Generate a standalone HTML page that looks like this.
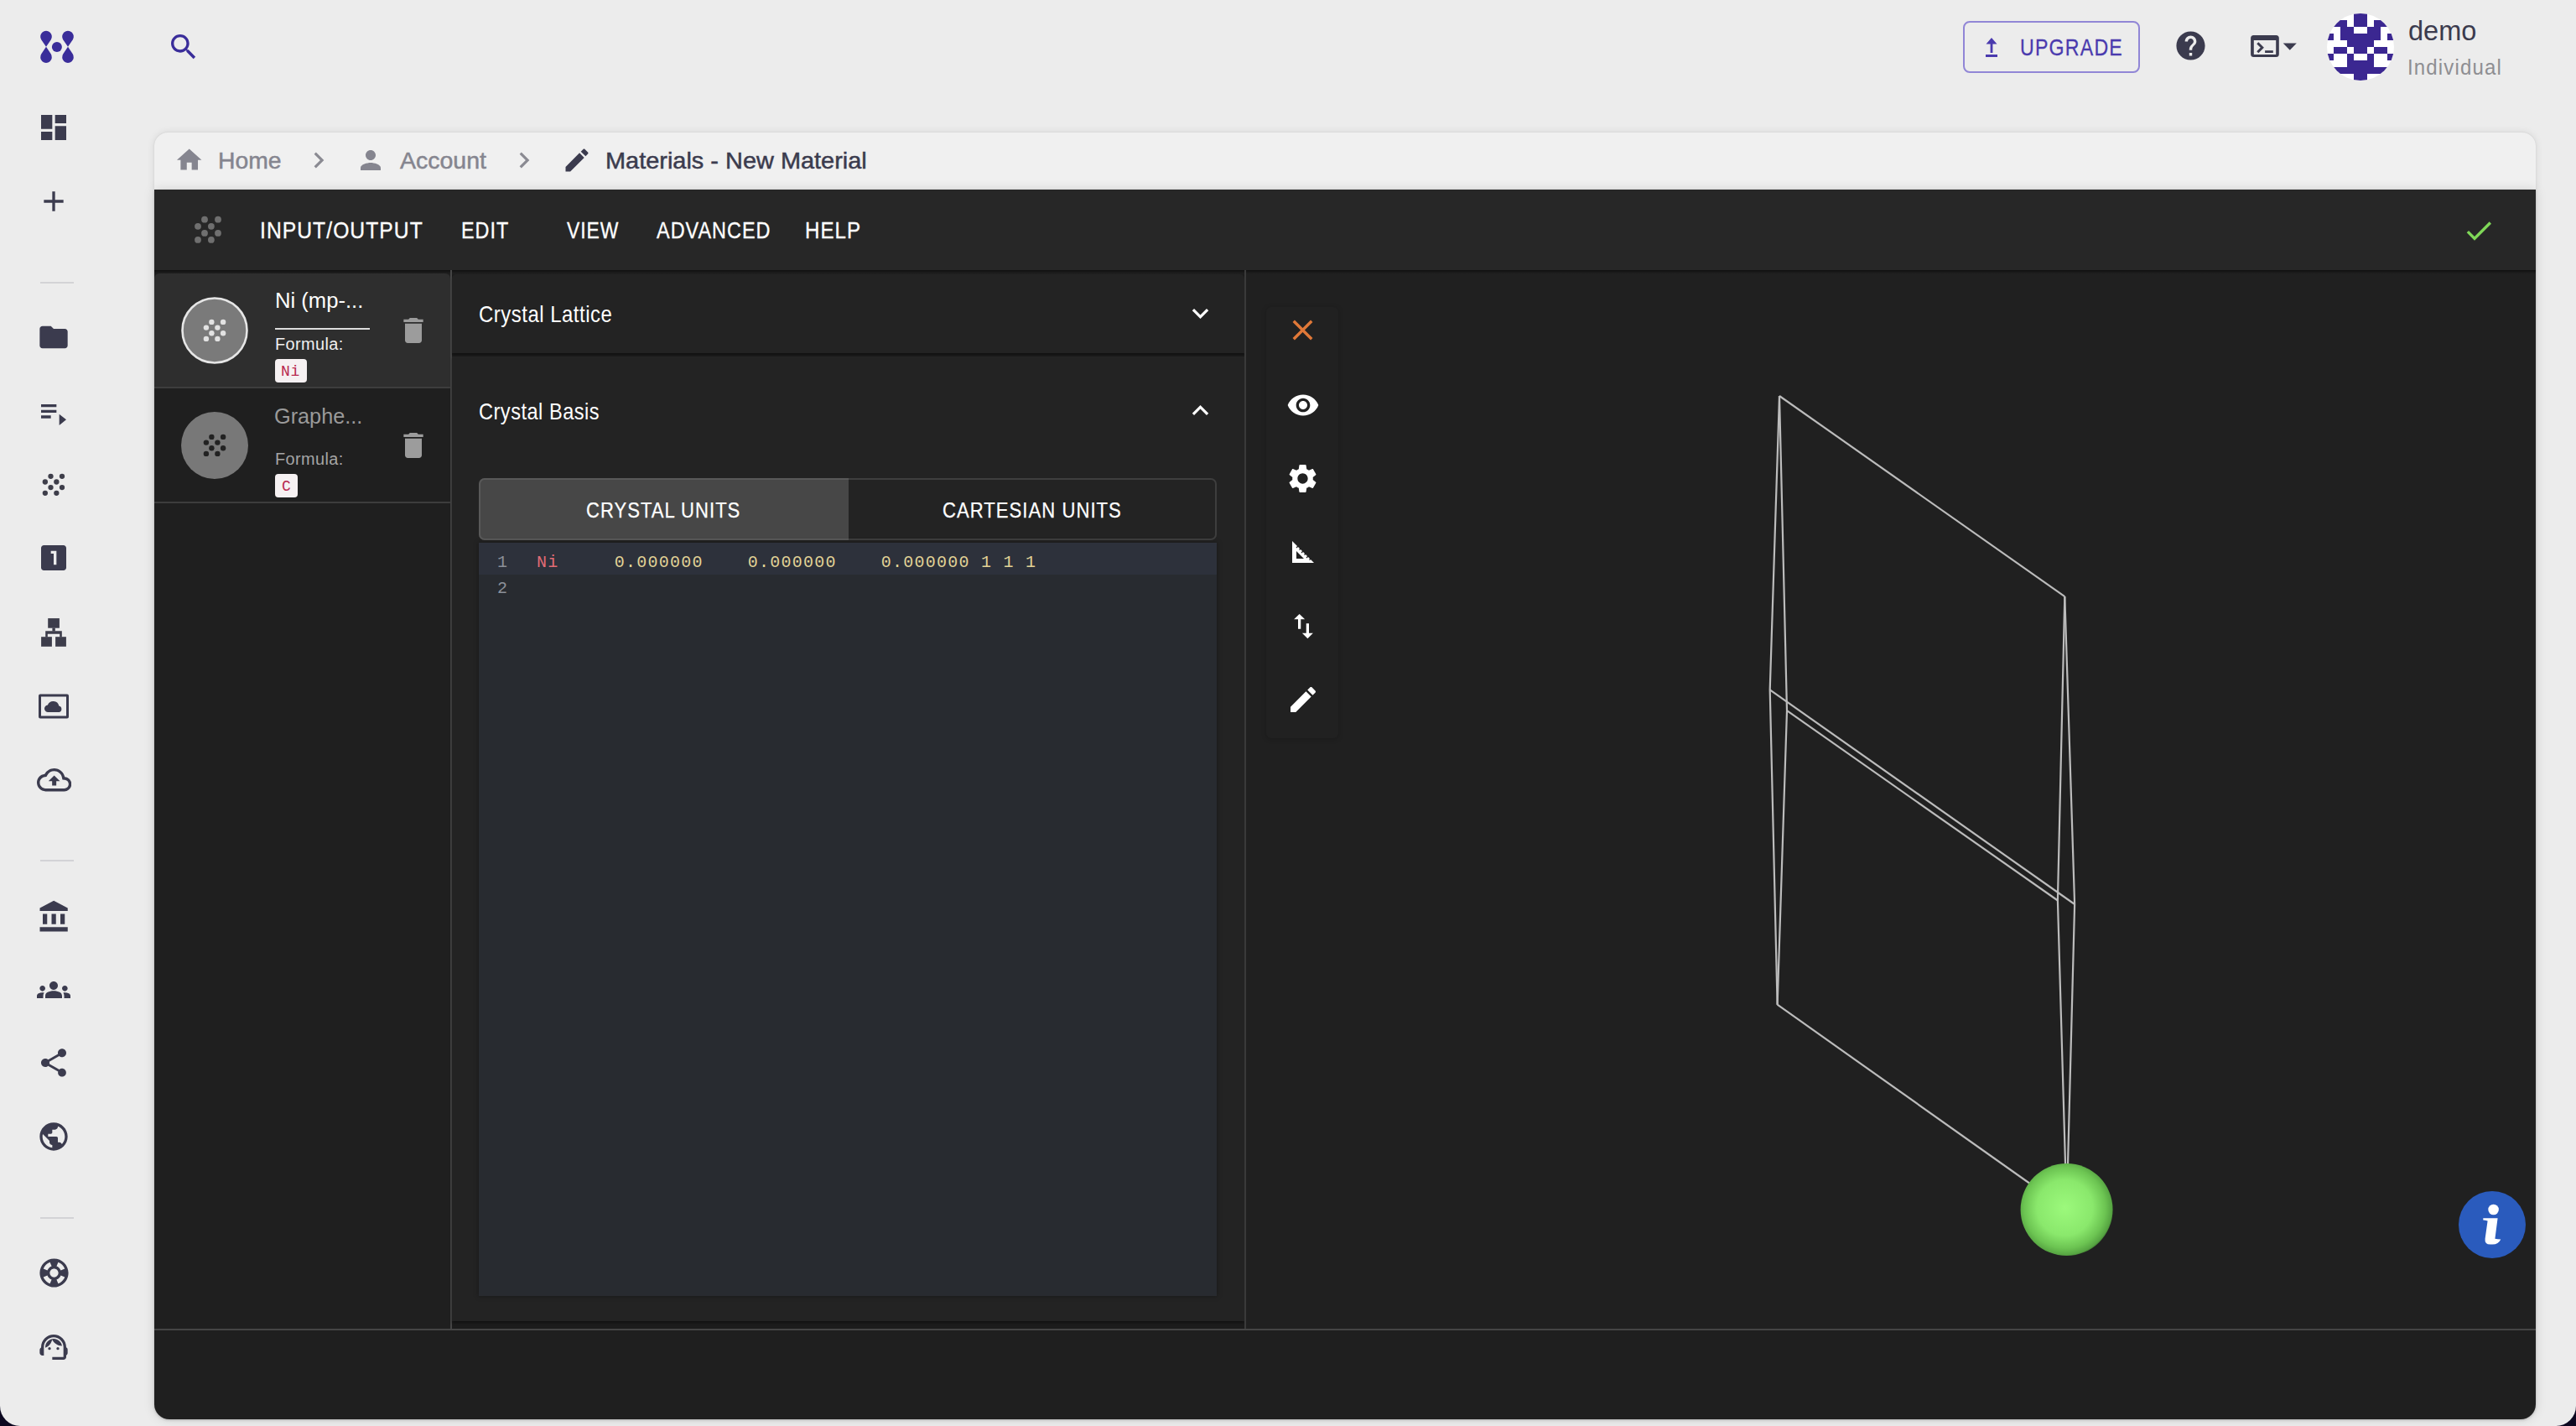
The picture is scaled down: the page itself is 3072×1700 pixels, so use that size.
<!DOCTYPE html>
<html><head><meta charset="utf-8">
<style>
*{box-sizing:border-box;margin:0;padding:0}
html,body{width:3072px;height:1700px;overflow:hidden;background:#0c0820;font-family:"Liberation Sans",sans-serif}
.abs{position:absolute}
#page{position:absolute;left:0;top:0;width:3072px;height:1700px;background:#ececec;border-radius:0 0 24px 24px;overflow:hidden}
svg.ic{position:absolute;fill:#3b3b4e}
.t{position:absolute;white-space:nowrap;line-height:1;transform-origin:0 0}
.div{position:absolute;left:48px;width:40px;height:2px;background:#d3d3d6}
</style></head>
<body>
<div id="page">
<!-- ============ LEFT SIDEBAR ============ -->
<!-- logo -->
<svg class="ic" style="left:44px;top:34px;width:48px;height:44px;fill:#3a2d9a" viewBox="44 34 48 44">
  <path d="M55,55.8 L49.32,47.38 A6.85,6.85 0 1 1 60.68,47.38 Z"/>
  <path d="M55,55.8 L49.32,64.22 A6.85,6.85 0 1 0 60.68,64.22 Z"/>
  <path d="M81,55.8 L75.32,47.38 A6.85,6.85 0 1 1 86.68,47.38 Z"/>
  <path d="M81,55.8 L75.32,64.22 A6.85,6.85 0 1 0 86.68,64.22 Z"/>
  <circle cx="67.9" cy="55.9" r="6"/>
</svg>
<!-- dashboard -->
<svg class="ic" style="left:44px;top:132px;width:40px;height:40px" viewBox="0 0 24 24"><path d="M3 13h8V3H3v10zm0 8h8v-6H3v6zm10 0h8V11h-8v10zm0-18v6h8V3h-8z"/></svg>
<!-- add -->
<svg class="ic" style="left:44px;top:220px;width:40px;height:40px" viewBox="0 0 24 24"><path d="M19 13h-6v6h-2v-6H5v-2h6V5h2v6h6v2z"/></svg>
<div class="div" style="top:336px"></div>
<!-- folder -->
<svg class="ic" style="left:44px;top:382px;width:40px;height:40px" viewBox="0 0 24 24"><path d="M10 4H4c-1.1 0-1.99.9-1.99 2L2 18c0 1.1.9 2 2 2h16c1.1 0 2-.9 2-2V8c0-1.1-.9-2-2-2h-8l-2-2z"/></svg>
<!-- playlist -->
<svg class="ic" style="left:44px;top:472px;width:40px;height:40px" viewBox="0 0 24 24"><path d="M3 6h11v2H3zm0 4h11v2H3zm0 4h7v2H3zm13-1v8l5-4z"/></svg>
<!-- dots -->
<svg class="abs" style="left:44px;top:558px;width:40px;height:40px;fill:#3e3e4a" viewBox="44 558 40 40">
  <circle cx="60.5" cy="567.8" r="3.15"/><circle cx="74" cy="567.8" r="3.15"/>
  <circle cx="53.85" cy="574.5" r="3.15"/><circle cx="67.35" cy="574.5" r="3.15"/>
  <circle cx="60.5" cy="581.1" r="3.15"/><circle cx="74" cy="581.1" r="3.15"/>
  <circle cx="53.85" cy="587.8" r="3.15"/><circle cx="67.35" cy="587.8" r="3.15"/>
</svg>
<!-- looks one -->
<svg class="ic" style="left:44px;top:645px;width:40px;height:40px" viewBox="0 0 24 24"><path d="M19 3H5c-1.1 0-2 .9-2 2v14c0 1.1.9 2 2 2h14c1.1 0 2-.9 2-2V5c0-1.1-.9-2-2-2zm-5 14h-2V9h-2V7h4v10z"/></svg>
<!-- sitemap -->
<svg class="abs" style="left:44px;top:733px;width:40px;height:40px;fill:#3d3d4b" viewBox="44 733 40 40">
  <rect x="57.2" y="737.1" width="13.7" height="11.6"/>
  <rect x="62.4" y="748.5" width="3.4" height="4"/>
  <path d="M54.2 752.2h19.6v7.2h-2.6v-3.7H56.8v3.7h-2.6z"/>
  <rect x="49.1" y="759.2" width="12.8" height="11.6"/>
  <rect x="66.1" y="759.2" width="12.8" height="11.6"/>
</svg>
<!-- cloud box -->
<svg class="ic" style="left:44px;top:822px;width:40px;height:40px" viewBox="0 0 40 40">
  <path d="M4 5.5h32a2 2 0 0 1 2 2v25a2 2 0 0 1-2 2H4a2 2 0 0 1-2-2v-25a2 2 0 0 1 2-2zm1 3v23h30v-23z"/>
  <path d="M13.5 27a4.2 4.2 0 0 1-.6-8.4 7 7 0 0 1 13.4 1 3.8 3.8 0 0 1 .3 7.4z"/>
</svg>
<!-- cloud upload -->
<svg class="ic" style="left:43.5px;top:909px;width:41.3px;height:41.3px" viewBox="0 0 24 24"><path d="M19.35 10.04C18.67 6.59 15.64 4 12 4 9.11 4 6.6 5.64 5.35 8.04 2.34 8.36 0 10.91 0 14c0 3.31 2.69 6 6 6h13c2.76 0 5-2.24 5-5 0-2.64-2.05-4.78-4.65-4.96zM19 18H6c-2.21 0-4-1.79-4-4 0-2.05 1.53-3.76 3.56-3.97l1.07-.11.5-.95C8.08 7.14 9.94 6 12 6c2.62 0 4.88 1.86 5.39 4.43l.3 1.5 1.53.11c1.56.1 2.78 1.41 2.78 2.96 0 1.65-1.35 3-3 3zM8 13h2.55v3h2.9v-3H16l-4-4z"/></svg>
<div class="div" style="top:1025px"></div>
<!-- bank -->
<svg class="ic" style="left:43.5px;top:1072px;width:42px;height:42px" viewBox="0 0 24 24"><path d="M4 10v7h3v-7H4zm6 0v7h3v-7h-3zM2 22h19v-3H2v3zm14-12v7h3v-7h-3zm-4.5-9L2 6v2h19V6l-9.5-5z"/></svg>
<!-- groups -->
<svg class="ic" style="left:44px;top:1160px;width:40px;height:40px" viewBox="0 0 24 24"><path d="M12 12.75c1.63 0 3.07.39 4.24.9 1.08.48 1.76 1.56 1.76 2.73V18H6v-1.61c0-1.18.68-2.26 1.76-2.73 1.17-.52 2.61-.91 4.24-.91zM4 13c1.1 0 2-.9 2-2s-.9-2-2-2-2 .9-2 2 .9 2 2 2zm1.13 1.1c-.37-.06-.74-.1-1.13-.1-.99 0-1.93.21-2.78.58C.48 14.9 0 15.62 0 16.43V18h4.5v-1.61c0-.83.23-1.61.63-2.29zM20 13c1.1 0 2-.9 2-2s-.9-2-2-2-2 .9-2 2 .9 2 2 2zm4 3.43c0-.81-.48-1.53-1.22-1.85-.85-.37-1.79-.58-2.78-.58-.39 0-.76.04-1.13.1.4.68.63 1.46.63 2.29V18H24v-1.57zM12 6c1.66 0 3 1.34 3 3s-1.34 3-3 3-3-1.34-3-3 1.34-3 3-3z"/></svg>
<!-- share -->
<svg class="ic" style="left:44px;top:1247px;width:40px;height:40px" viewBox="0 0 24 24"><path d="M18 16.08c-.76 0-1.44.3-1.96.77L8.91 12.7c.05-.23.09-.46.09-.7s-.04-.47-.09-.7l7.05-4.11c.54.5 1.25.81 2.04.81 1.66 0 3-1.34 3-3s-1.34-3-3-3-3 1.34-3 3c0 .24.04.47.09.7L8.04 9.81C7.5 9.31 6.790 9 6 9c-1.66 0-3 1.34-3 3s1.34 3 3 3c.79 0 1.5-.31 2.04-.81l7.12 4.16c-.05.21-.08.43-.08.65 0 1.61 1.31 2.92 2.92 2.92 1.61 0 2.92-1.31 2.92-2.92s-1.31-2.92-2.92-2.92z"/></svg>
<!-- globe -->
<svg class="ic" style="left:44px;top:1335px;width:40px;height:40px" viewBox="0 0 24 24"><path d="M12 2C6.48 2 2 6.48 2 12s4.480 10 10 10 10-4.48 10-10S17.52 2 12 2zm-1 17.93c-3.95-.49-7-3.85-7-7.93 0-.62.08-1.21.21-1.79L9 15v1c0 1.1.9 2 2 2v1.93zm6.9-2.54c-.26-.81-1-1.39-1.9-1.39h-1v-3c0-.55-.45-1-1-1H8v-2h2c.55 0 1-.45 1-1V7h2c1.1 0 2-.9 2-2v-.41c2.93 1.19 5 4.06 5 7.41 0 2.08-.8 3.97-2.1 5.39z"/></svg>
<div class="div" style="top:1451px"></div>
<!-- lifebuoy -->
<svg class="ic" style="left:43.5px;top:1497px;width:41px;height:41px" viewBox="0 0 24 24"><path d="M12 2C6.48 2 2 6.48 2 12s4.48 10 10 10 10-4.48 10-10S17.52 2 12 2zm7.46 7.12l-2.78 1.15c-.51-1.360-1.58-2.44-2.95-2.94l1.15-2.78c2.1.8 3.77 2.47 4.58 4.57zM12 15c-1.66 0-3-1.34-3-3s1.34-3 3-3 3 1.34 3 3-1.34 3-3 3zM9.13 4.54l1.17 2.78c-1.38.5-2.47 1.59-2.98 2.97L4.54 9.13c.81-2.11 2.48-3.78 4.59-4.59zM4.54 14.87l2.78-1.15c.51 1.38 1.59 2.46 2.97 2.96l-1.17 2.78c-2.1-.81-3.77-2.48-4.58-4.59zm10.34 4.59l-1.15-2.78c1.37-.51 2.45-1.59 2.95-2.97l2.78 1.17c-.81 2.1-2.48 3.77-4.58 4.58z"/></svg>
<!-- support agent -->
<svg class="ic" style="left:44px;top:1586px;width:40px;height:40px" viewBox="0 0 24 24"><path d="M21 12.22C21 6.73 16.74 3 12 3c-4.69 0-9 3.65-9 9.28-.6.34-1 .98-1 1.72v2c0 1.1.9 2 2 2h1v-6.1c0-3.87 3.13-7 7-7s7 3.13 7 7V19h-8v2h8c1.1 0 2-.9 2-2v-1.22c.59-.31 1-.92 1-1.64v-2.3c0-.7-.41-1.31-1-1.62z"/><circle cx="9" cy="13" r="1"/><circle cx="15" cy="13" r="1"/><path d="M18 11.03C17.52 8.18 15.04 6 12.05 6c-3.03 0-6.29 2.51-6.03 6.45 2.47-1.01 4.33-3.21 4.86-5.89 1.31 2.63 4 4.44 7.12 4.47z"/></svg>

<!-- ============ HEADER ============ -->
<svg class="ic" style="left:199px;top:36px;width:40px;height:40px;fill:#3a2d9a" viewBox="0 0 24 24"><path d="M15.5 14h-.79l-.28-.27C15.41 12.59 16 11.11 16 9.5 16 5.91 13.09 3 9.5 3S3 5.91 3 9.5 5.91 16 9.5 16c1.61 0 3.090-.59 4.23-1.57l.27.28v.79l5 4.99L20.49 19l-4.99-5zm-6 0C7.01 14 5 11.99 5 9.5S7.01 5 9.5 5 14 7.01 14 9.5 11.99 14 9.5 14z"/></svg>

<div class="abs" style="left:2341px;top:25px;width:211px;height:62px;border:2px solid #9186d6;border-radius:8px"></div>
<svg class="abs" style="left:2360px;top:40px;width:30px;height:32px;fill:#4a3aae" viewBox="2360 40 30 32">
  <path d="M2375 45 L2381.5 52.5 H2376.4 V63 H2373.6 V52.5 H2368.5 Z"/><rect x="2368" y="65" width="14" height="3"/>
</svg>
<div class="t" id="upg" style="left:2409.2px;top:42.6px;font-size:28px;color:#4a3aae;letter-spacing:1.5px;-webkit-text-stroke:0.3px #4a3aae;transform:scaleX(0.8257)">UPGRADE</div>

<svg class="ic" style="left:2592px;top:34px;width:41px;height:41px" viewBox="0 0 24 24"><path d="M12 2C6.48 2 2 6.48 2 12s4.48 10 10 10 10-4.48 10-10S17.52 2 12 2zm1 17h-2v-2h2v2zm2.07-7.75l-.9.92C13.45 12.9 13 13.5 13 15h-2v-.5c0-1.1.45-2.1 1.17-2.83l1.24-1.26c.37-.36.59-.86.59-1.41 0-1.1-.9-2-2-2s-2 .9-2 2H8c0-2.21 1.79-4 4-4s4 1.79 4 4c0 .88-.36 1.68-.93 2.25z"/></svg>
<svg class="abs" style="left:2680px;top:38px;width:64px;height:34px" viewBox="2680 38 64 34">
  <path fill="#3b3b4e" fill-rule="evenodd" d="M2687.6 41.9h26.7a3.5 3.5 0 0 1 3.5 3.5v19a3.5 3.5 0 0 1-3.5 3.5h-26.7a3.5 3.5 0 0 1-3.5-3.5v-19a3.5 3.5 0 0 1 3.5-3.5zM2687.8 48v17.1h26.4V48z"/>
  <path fill="none" stroke="#3b3b4e" stroke-width="3" d="M2692.3 51.3l5.5 5.5-5.5 5.5"/>
  <rect x="2701.1" y="60.2" width="9.7" height="2.8" fill="#3b3b4e"/>
  <path fill="#3b3b4e" d="M2722.7 51.6h16.1l-8.05 8.2z"/>
</svg>


<!-- avatar -->
<svg class="abs" style="left:2775px;top:16px;width:80px;height:80px" viewBox="0 0 10 10">
  <defs><clipPath id="avc"><circle cx="5" cy="5" r="5"/></clipPath></defs>
  <g clip-path="url(#avc)">
  <rect width="10" height="10" fill="#fff"/>
  <g fill="#3b2791">
   <rect x="4" y="0" width="2" height="2"/>
   <rect x="1" y="1" width="2" height="1"/><rect x="7" y="1" width="2" height="1"/>
   <rect x="2" y="2" width="2" height="1"/><rect x="6" y="2" width="2" height="1"/>
   <rect x="0" y="3" width="1" height="1"/><rect x="2" y="3" width="6" height="1"/><rect x="9" y="3" width="1" height="1"/>
   <rect x="3" y="4" width="4" height="1"/>
   <rect x="1" y="5" width="2" height="1"/><rect x="4" y="5" width="2" height="1"/><rect x="7" y="5" width="2" height="1"/>
   <rect x="0" y="6" width="1" height="1"/><rect x="3" y="6" width="1" height="1"/><rect x="6" y="6" width="1" height="1"/><rect x="9" y="6" width="1" height="1"/>
   <rect x="3" y="7" width="4" height="1"/>
   <rect x="1" y="8" width="8" height="1"/>
   <rect x="4" y="9" width="2" height="1"/>
  </g></g>
</svg>
<div class="t" id="demo" style="left:2871.5px;top:19.8px;font-size:33px;color:#3b3b4e;transform:scaleX(0.9852)">demo</div>
<div class="t" id="indiv" style="left:2870.5px;top:68.3px;font-size:25px;color:#8e8e92;letter-spacing:1.2px;transform:scaleX(0.9602)">Individual</div>

<!-- ============ BREADCRUMB ============ -->
<div class="abs" style="left:184px;top:158px;width:2840px;height:68px;background:#f0f0f0;border-radius:16px 16px 0 0;box-shadow:0 0 10px rgba(0,0,0,0.10),0 0 2px rgba(0,0,0,0.10)"></div>
<svg class="ic" style="left:208px;top:172.5px;width:35.4px;height:35.4px;fill:#85858f" viewBox="0 0 24 24"><path d="M10 20v-6h4v6h5v-8h3L12 3 2 12h3v8z"/></svg>
<div class="t" id="home" style="left:259.8px;top:178.2px;font-size:28px;color:#85858f;-webkit-text-stroke:0.5px #85858f;transform:scaleX(1.0113)">Home</div>
<svg class="ic" style="left:360.6px;top:172.2px;width:38px;height:38px;fill:#8a8a92" viewBox="0 0 24 24"><path d="M10 6L8.59 7.41 13.17 12l-4.58 4.59L10 18l6-6z"/></svg>
<svg class="ic" style="left:423.8px;top:173px;width:36px;height:36px;fill:#85858f" viewBox="0 0 24 24"><path d="M12 12c2.21 0 4-1.79 4-4s-1.79-4-4-4-4 1.79-4 4 1.79 4 4 4zm0 2c-2.67 0-8 1.34-8 4v2h16v-2c0-2.66-5.33-4-8-4z"/></svg>
<div class="t" id="acct" style="left:477.4px;top:178.2px;font-size:28px;color:#85858f;-webkit-text-stroke:0.5px #85858f;transform:scaleX(1.0179)">Account</div>
<svg class="ic" style="left:606.4px;top:172.2px;width:38px;height:38px;fill:#8a8a92" viewBox="0 0 24 24"><path d="M10 6L8.59 7.41 13.17 12l-4.58 4.59L10 18l6-6z"/></svg>
<svg class="ic" style="left:669.5px;top:173px;width:36px;height:36px;fill:#3b3b4e" viewBox="0 0 24 24"><path d="M3 17.25V21h3.75L17.81 9.94l-3.75-3.75L3 17.25zM20.71 7.04c.39-.39.39-1.02 0-1.41l-2.34-2.34c-.39-.39-1.02-.39-1.41 0l-1.83 1.83 3.75 3.75 1.83-1.83z"/></svg>
<div class="t" id="mat" style="left:722.4px;top:177.8px;font-size:28px;color:#3b3b4e;-webkit-text-stroke:0.5px #3b3b4e;transform:scaleX(1.0327)">Materials - New Material</div>

<!-- ============ DARK CARD ============ -->
<div class="abs" style="left:184px;top:226px;width:2840px;height:1466px;background:#1f1f1f;border-radius:0 0 18px 18px;box-shadow:0 0 14px rgba(0,0,0,0.13),0 1px 3px rgba(0,0,0,0.2)"></div>
<div class="abs" style="left:184px;top:226px;width:2840px;height:96px;background:#272727"></div>
<div class="abs" style="left:184px;top:322px;width:2840px;height:5px;background:linear-gradient(#101010,#1a1a1a 50%,#202020)"></div>


<!-- toolbar -->
<svg class="abs" style="left:228px;top:254px;width:40px;height:40px;fill:#6f6f6f" viewBox="228 254 40 40">
  <circle cx="244" cy="261.7" r="3.9"/><circle cx="260" cy="261.7" r="3.9"/>
  <circle cx="236" cy="269.8" r="3.9"/><circle cx="251.9" cy="269.8" r="3.9"/>
  <circle cx="244" cy="277.9" r="3.9"/><circle cx="260" cy="277.9" r="3.9"/>
  <circle cx="236" cy="285.9" r="3.9"/><circle cx="251.9" cy="285.9" r="3.9"/>
</svg>
<div class="t" id="m1" style="left:310.4px;top:260.8px;font-size:28px;color:#fff;letter-spacing:1.2px;-webkit-text-stroke:0.35px #fff;transform:scaleX(0.8804)">INPUT/OUTPUT</div>
<div class="t" id="m2" style="left:550.2px;top:260.8px;font-size:28px;color:#fff;letter-spacing:1.2px;-webkit-text-stroke:0.35px #fff;transform:scaleX(0.8340)">EDIT</div>
<div class="t" id="m3" style="left:675.6px;top:260.8px;font-size:28px;color:#fff;letter-spacing:1.2px;-webkit-text-stroke:0.35px #fff;transform:scaleX(0.8169)">VIEW</div>
<div class="t" id="m4" style="left:783.0px;top:260.8px;font-size:28px;color:#fff;letter-spacing:1.2px;-webkit-text-stroke:0.35px #fff;transform:scaleX(0.8365)">ADVANCED</div>
<div class="t" id="m5" style="left:960.1px;top:260.8px;font-size:28px;color:#fff;letter-spacing:1.2px;-webkit-text-stroke:0.35px #fff;transform:scaleX(0.8603)">HELP</div>
<svg class="ic" style="left:2936px;top:255px;width:40px;height:40px;fill:#7fd858" viewBox="0 0 24 24"><path d="M9 16.17L4.83 12l-1.42 1.41L9 19 21 7l-1.41-1.41z"/></svg>

<!-- list -->
<div class="abs" style="left:184px;top:326px;width:353px;height:136px;background:#2e2e2e;border-radius:6px 6px 0 0"></div>
<div class="abs" style="left:184px;top:461px;width:353px;height:2px;background:#3d3d3d"></div>
<div class="abs" style="left:184px;top:598px;width:353px;height:2px;background:#3d3d3d"></div>
<div class="abs" style="left:537px;top:322px;width:2px;height:1263px;background:#454545"></div>

<svg class="abs" style="left:214px;top:352px;width:84px;height:84px" viewBox="0 0 84 84">
  <circle cx="42" cy="42" r="38.5" fill="#7a7a7a" stroke="#e6e6e6" stroke-width="2.6"/>
  <g fill="#e2e2e2">
   <circle cx="38.4" cy="31.9" r="3.2"/><circle cx="52.1" cy="31.9" r="3.2"/>
   <circle cx="31.9" cy="38.6" r="3.2"/><circle cx="45.4" cy="38.6" r="3.2"/>
   <circle cx="38.4" cy="45.2" r="3.2"/><circle cx="52.1" cy="45.2" r="3.2"/>
   <circle cx="31.9" cy="51.9" r="3.2"/><circle cx="45.4" cy="51.9" r="3.2"/>
  </g>
</svg>
<div class="t" id="ni" style="left:327.5px;top:345.2px;font-size:26px;color:#fff;transform:scaleX(0.9856)">Ni (mp-...</div>
<div class="abs" style="left:328px;top:391px;width:113px;height:2px;background:#dcdcdc"></div>
<div class="t" id="f1" style="left:327.5px;top:399.9px;font-size:20px;color:#f0f0f0;letter-spacing:0.4px;transform:scaleX(0.9938)">Formula:</div>
<div class="abs" style="left:328px;top:428px;width:38px;height:28px;background:#f6f1f2;border-radius:4px"></div>
<div class="t" style="left:335px;top:434px;font-family:'Liberation Mono',monospace;font-size:18px;letter-spacing:0.6px;color:#b8294f">Ni</div>
<svg class="ic" style="left:473px;top:374px;width:40px;height:40px;fill:#9c9c9c" viewBox="0 0 24 24"><path d="M6 19c0 1.1.9 2 2 2h8c1.1 0 2-.9 2-2V7H6v12zM19 4h-3.5l-1-1h-5l-1 1H5v2h14V4z"/></svg>

<svg class="abs" style="left:214px;top:489px;width:84px;height:84px" viewBox="0 0 84 84">
  <circle cx="42" cy="42" r="40" fill="#787878"/>
  <g fill="#222">
   <circle cx="38.4" cy="31.9" r="3.2"/><circle cx="52.1" cy="31.9" r="3.2"/>
   <circle cx="31.9" cy="38.6" r="3.2"/><circle cx="45.4" cy="38.6" r="3.2"/>
   <circle cx="38.4" cy="45.2" r="3.2"/><circle cx="52.1" cy="45.2" r="3.2"/>
   <circle cx="31.9" cy="51.9" r="3.2"/><circle cx="45.4" cy="51.9" r="3.2"/>
  </g>
</svg>
<div class="t" id="gr" style="left:327.0px;top:483.0px;font-size:26px;color:#9a9a9a;transform:scaleX(0.9718)">Graphe...</div>
<div class="t" id="f2" style="left:327.5px;top:537.0px;font-size:20px;color:#a5a5a5;letter-spacing:0.4px;transform:scaleX(0.9938)">Formula:</div>
<div class="abs" style="left:328px;top:565px;width:27px;height:28px;background:#f6f1f2;border-radius:4px"></div>
<div class="t" style="left:336px;top:571px;font-family:'Liberation Mono',monospace;font-size:18px;color:#b8294f">C</div>
<svg class="ic" style="left:473px;top:511px;width:40px;height:40px;fill:#9c9c9c" viewBox="0 0 24 24"><path d="M6 19c0 1.1.9 2 2 2h8c1.1 0 2-.9 2-2V7H6v12zM19 4h-3.5l-1-1h-5l-1 1H5v2h14V4z"/></svg>

<!-- middle panel -->
<div class="abs" style="left:539px;top:327px;width:945px;height:1257px;background:#1c1c1c"></div>
<div class="abs" style="left:539px;top:327px;width:945px;height:94px;background:#232323;border-radius:5px 5px 0 0;box-shadow:0 2px 2px rgba(0,0,0,0.35)"></div>
<div class="abs" style="left:539px;top:425px;width:945px;height:1150px;background:#232323;box-shadow:0 2px 3px rgba(0,0,0,0.4)"></div>
<div class="t" id="cl" style="left:571.1px;top:361.4px;font-size:28px;color:#fff;letter-spacing:0.6px;transform:scaleX(0.8545)">Crystal Lattice</div>
<svg class="ic" style="left:1412px;top:354px;width:39px;height:39px;fill:#fff" viewBox="0 0 24 24"><path d="M16.59 8.59L12 13.17 7.41 8.59 6 10l6 6 6-6z"/></svg>
<div class="t" id="cb" style="left:571.1px;top:477.0px;font-size:28px;color:#fff;letter-spacing:0.6px;transform:scaleX(0.8416)">Crystal Basis</div>
<svg class="ic" style="left:1412px;top:470px;width:39px;height:39px;fill:#fff" viewBox="0 0 24 24"><path d="M12 8l-6 6 1.41 1.41L12 10.83l4.59 4.58L18 14z"/></svg>

<div class="abs" style="left:571px;top:570px;width:880px;height:74px;border:2px solid #3e3e3e;border-radius:7px;background:#232323"></div>
<div class="abs" style="left:571px;top:570px;width:441px;height:74px;border:2px solid #595959;border-right:none;border-radius:7px 0 0 7px;background:#474747"></div>
<div class="t" id="cu" style="left:699.4px;top:594.6px;font-size:26px;color:#fff;letter-spacing:1.2px;-webkit-text-stroke:0.25px #fff;transform:scaleX(0.8480)">CRYSTAL UNITS</div>
<div class="t" id="cau" style="left:1124.0px;top:594.6px;font-size:26px;color:#fff;letter-spacing:1.2px;-webkit-text-stroke:0.25px #fff;transform:scaleX(0.8500)">CARTESIAN UNITS</div>

<div class="abs" style="left:571px;top:647px;width:880px;height:898px;background:#282b30;box-shadow:0 0 6px rgba(0,0,0,0.35)"></div>
<div class="abs" style="left:571px;top:647px;width:880px;height:38px;background:#2d313b"></div>
<div class="t" style="left:593px;top:661px;font-family:'Liberation Mono',monospace;font-size:20px;color:#8b9099">1</div>
<div class="t" style="left:593px;top:692px;font-family:'Liberation Mono',monospace;font-size:20px;color:#8b9099">2</div>
<div class="t" id="code" style="left:640px;top:661px;font-family:'Liberation Mono',monospace;font-size:20px;letter-spacing:1.25px;color:#e2d396;white-space:pre"><span style="color:#e06c75">Ni</span>     0.000000    0.000000    0.000000 1 1 1</div>

<!-- right panel -->
<div class="abs" style="left:1484px;top:322px;width:2px;height:1263px;background:#3a3a3a"></div>
<div class="abs" style="left:1486px;top:326px;width:1538px;height:1259px;background:#202020"></div>
<div class="abs" style="left:1510px;top:366px;width:86px;height:514px;background:#212121;border-radius:6px;box-shadow:0 1px 6px rgba(0,0,0,0.2)"></div>
<svg class="ic" style="left:1533px;top:373px;width:41px;height:41px;fill:#e07838" viewBox="0 0 24 24"><path d="M19 6.41L17.59 5 12 10.59 6.41 5 5 6.41 10.59 12 5 17.59 6.41 19 12 13.41 17.59 19 19 17.59 13.41 12z"/></svg>
<svg class="ic" style="left:1534px;top:463px;width:40px;height:40px;fill:#fff" viewBox="0 0 24 24"><path d="M12 4.5C7 4.5 2.730 7.61 1 12c1.73 4.39 6 7.5 11 7.5s9.27-3.11 11-7.5c-1.73-4.39-6-7.5-11-7.5zM12 17c-2.76 0-5-2.24-5-5s2.24-5 5-5 5 2.24 5 5-2.24 5-5 5zm0-8c-1.66 0-3 1.34-3 3s1.34 3 3 3 3-1.34 3-3-1.34-3-3-3z"/></svg>
<svg class="ic" style="left:1533px;top:550px;width:41px;height:41px;fill:#fff" viewBox="0 0 24 24"><path d="M19.14 12.94c.04-.3.06-.61.06-.94 0-.32-.02-.64-.07-.94l2.03-1.58c.18-.14.23-.41.12-.61l-1.92-3.32c-.12-.22-.37-.29-.59-.22l-2.39.96c-.5-.38-1.03-.7-1.62-.94l-.36-2.54c-.04-.24-.24-.41-.48-.41h-3.84c-.24 0-.43.17-.47.41l-.36 2.54c-.59.24-1.13.57-1.62.94l-2.39-.96c-.22-.08-.47 0-.59.22L2.74 8.87c-.12.21-.08.47.12.61l2.03 1.58c-.05.3-.09.63-.09.94s.02.64.07.94l-2.03 1.58c-.18.14-.23.41-.12.61l1.92 3.32c.12.22.37.29.59.22l2.39-.96c.5.38 1.03.7 1.62.94l.36 2.54c.05.24.24.41.48.41h3.84c.24 0 .44-.17.47-.41l.36-2.54c.59-.24 1.13-.56 1.62-.94l2.39.96c.22.08.47 0 .59-.22l1.92-3.32c.12-.22.07-.47-.12-.61l-2.01-1.58zM12 15.6c-1.98 0-3.6-1.62-3.6-3.6s1.62-3.6 3.6-3.6 3.6 1.62 3.6 3.6-1.62 3.6-3.6 3.6z"/></svg>
<svg class="abs" style="left:1541px;top:645px;width:26px;height:26px" viewBox="0 0 26 26">
  <path fill="#fff" fill-rule="evenodd" d="M0 0 L26 26 H0 Z M5 12 V21 H14 Z"/>
  <g stroke="#202020" stroke-width="1.3">
    <path d="M7.5 5.5 l-2.5 2.5"/><path d="M10.5 8.5 l-2 2"/><path d="M13.5 11.5 l-2.5 2.5"/><path d="M16.5 14.5 l-2 2"/><path d="M19.5 17.5 l-2.5 2.5"/><path d="M22.5 20.5 l-2 2"/>
  </g>
</svg>
<svg class="ic" style="left:1535px;top:727px;width:39px;height:39px;fill:#fff" viewBox="0 0 24 24"><path d="M16 17.01V10h-2v7.01h-3L15 21l4-3.99h-3zM9 3L5 6.99h3V14h2V6.99h3L9 3z"/></svg>
<svg class="ic" style="left:1534px;top:814px;width:40px;height:40px;fill:#fff" viewBox="0 0 24 24"><path d="M3 17.25V21h3.75L17.81 9.94l-3.75-3.75L3 17.25zM20.71 7.04c.39-.39.39-1.02 0-1.41l-2.34-2.34c-.39-.39-1.02-.39-1.41 0l-1.83 1.83 3.75 3.75 1.83-1.83z"/></svg>

<!-- lattice -->
<svg class="abs" style="left:1486px;top:326px;width:1538px;height:1259px" viewBox="1486 326 1538 1259">
  <defs>
    <radialGradient id="sph" cx="0.48" cy="0.48" r="0.55">
      <stop offset="0" stop-color="#9cf97c"/>
      <stop offset="0.55" stop-color="#8ae86c"/>
      <stop offset="0.8" stop-color="#6cc452"/>
      <stop offset="0.93" stop-color="#56a442"/>
      <stop offset="1" stop-color="#2f5a24"/>
    </radialGradient>
  </defs>
  <g stroke="#bcbcbc" stroke-width="2.2" fill="none" stroke-linejoin="round">
    <path d="M2122 472 L2462.3 711.1"/>
    <path d="M2122 472 L2110.7 822.4 L2119.6 1197.7"/>
    <path d="M2122 472 L2131 847.2 L2119.6 1197.7"/>
    <path d="M2462.3 711.1 L2474.1 1078 L2464.6 1442"/>
    <path d="M2462.3 711.1 L2453.9 1073.5 L2464.6 1442"/>
    <path d="M2110.7 822.4 L2474.1 1078"/>
    <path d="M2131 847.2 L2453.9 1073.5"/>
    <path d="M2119.6 1197.7 L2464.6 1442"/>
  </g>
  <circle cx="2464.6" cy="1442" r="55" fill="url(#sph)"/>
</svg>

<!-- bottom -->
<div class="abs" style="left:184px;top:1584px;width:2840px;height:2px;background:#454545"></div>

<!-- info -->
<svg class="abs" style="left:2932px;top:1420px;width:80px;height:80px" viewBox="0 0 80 80">
  <circle cx="40" cy="40" r="40" fill="#2a5bbd"/>
  <circle cx="41.6" cy="22" r="6.3" fill="#fff"/>
  <path fill="#fff" d="M29.3 32.3 H46.6 L43.4 56.8 Q46.5 57.5 50.3 57.6 Q47.5 63.6 40.5 63.6 H37.8 Q30.8 63.6 31.6 56.8 L34.6 35.6 Q31.5 34.8 29.3 34.6 Z"/>
</svg>

</div>
</body></html>
